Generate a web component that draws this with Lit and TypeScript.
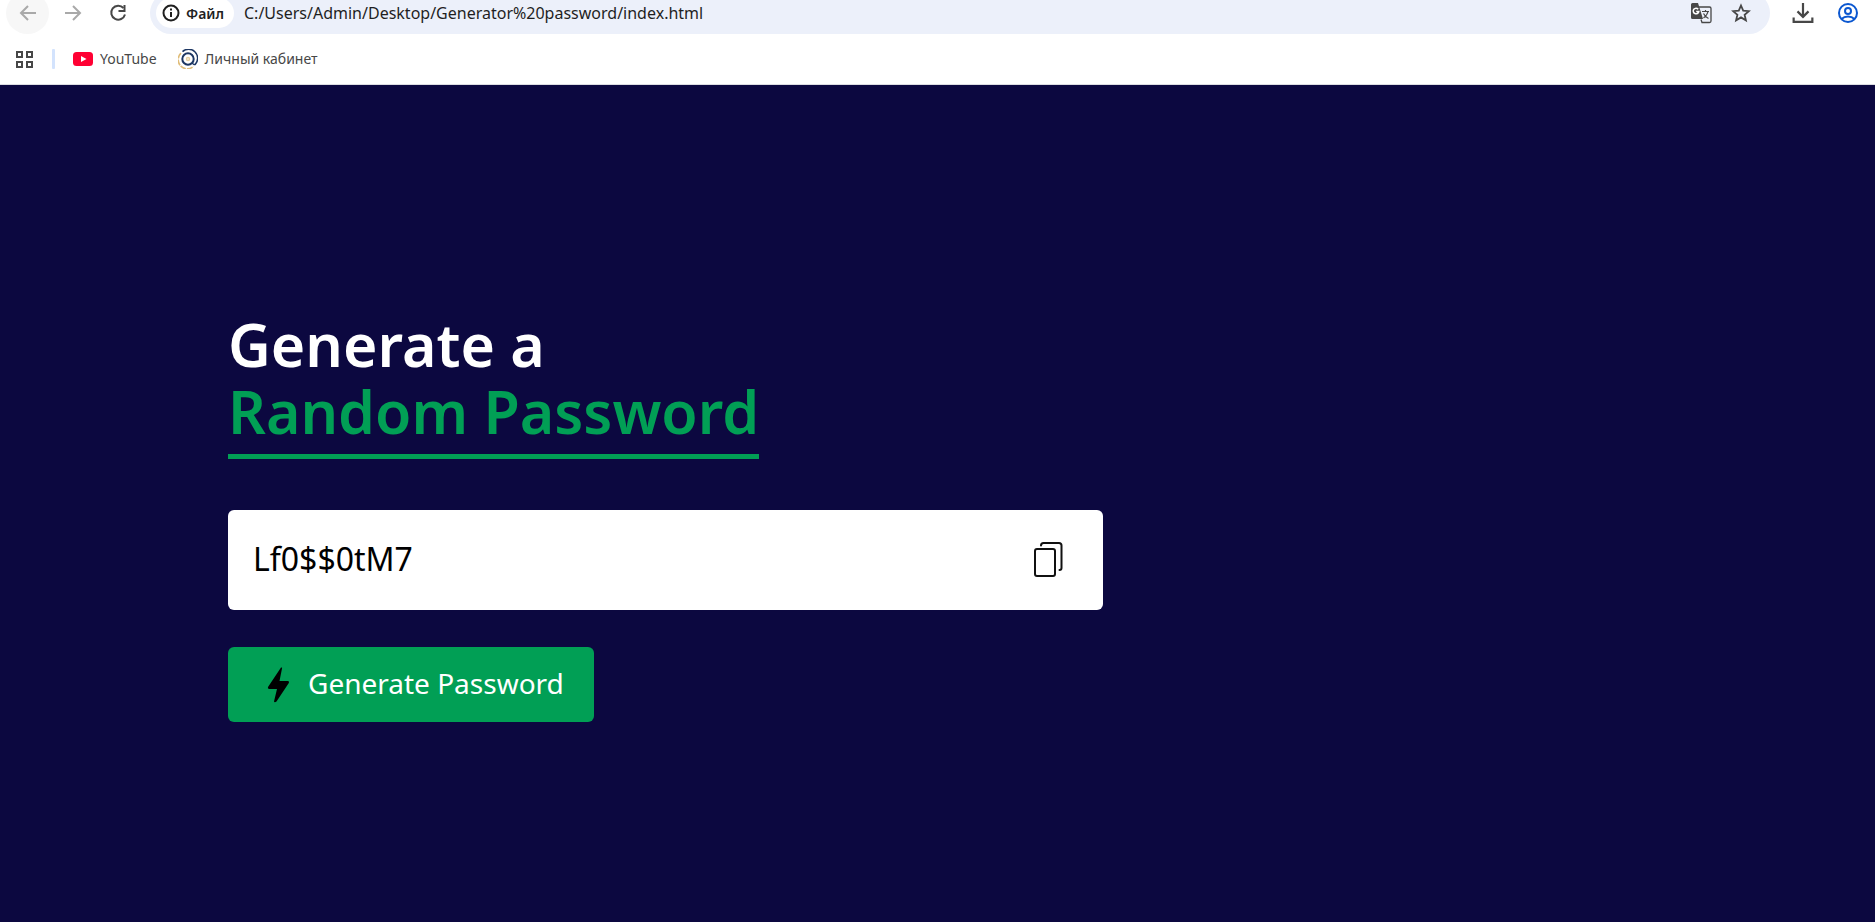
import { LitElement, html, css, svg } from "lit";
import { customElement, state } from "lit/decorators.js";

const icons = {
  back: svg`<path d="M18 10H3M10 3L3 10l7 7" />`,
  forward: svg`<path d="M2 10h15M10 3l7 7-7 7" />`,
  download: svg`<path d="M10 1v12M5 8.500l5 5 5-5M1.500 14v4h17v-4" />`,
};

@customElement("browser-bar")
export class BrowserBar extends LitElement {
  static styles = css`
    :host {
      display: block;
      overflow: hidden;
      background: #fff;
      border-bottom: 1px solid #dcdde2;
      font-family: "Segoe UI", "Noto Sans", sans-serif;
      color: #1f1f1f;
    }
    button {
      border: 0;
      margin: 0;
      padding: 0;
      background: none;
      color: inherit;
      font: inherit;
      display: inline-flex;
      align-items: center;
      justify-content: center;
    }
    svg {
      display: block;
      flex: none;
      fill: none;
      stroke: currentColor;
      stroke-width: 2;
    }
    .toolbar {
      display: flex;
      align-items: center;
      height: 42px;
      margin-top: -8px;
      padding: 0 6px;
    }
    .nav {
      width: 43px;
      height: 42px;
      border-radius: 50%;
      color: #a9a9a9;
      margin-right: 2px;
      flex: none;
    }
    .back {
      background: #f7f7f7;
    }
    .reload {
      color: #474747;
      margin-right: 11px;
    }
    .omnibox {
      flex: 1;
      min-width: 0;
      display: flex;
      align-items: center;
      height: 42px;
      border-radius: 21px;
      background: #ecf0fa;
      padding: 0 19px 0 6px;
      box-sizing: border-box;
    }
    .chip {
      height: 30px;
      border-radius: 15px;
      background: #fff;
      padding: 0 10px 0 6px;
      gap: 6px;
      font-size: 14px;
      font-weight: 600;
      flex: none;
    }
    .url {
      flex: 1;
      min-width: 0;
      border: 0;
      background: none;
      outline: 0;
      padding: 0;
      margin-left: 10px;
      font: inherit;
      font-size: 16px;
      color: inherit;
    }
    .tool {
      flex: none;
      color: #474747;
    }
    .translate {
      margin-right: 19px;
    }
    .download {
      margin-left: 22px;
    }
    .profile {
      margin: 0 11px 0 24px;
      color: #0b57d0;
    }
    .bookmarks {
      display: flex;
      align-items: center;
      height: 50px;
      padding: 0 15px;
      font-size: 14px;
      color: #474747;
    }
    .divider {
      width: 3px;
      height: 20px;
      border-radius: 1px;
      background: #d3e3fd;
      margin: 0 18px;
    }
    .bookmark {
      display: flex;
      align-items: center;
      gap: 7px;
      margin-right: 21px;
      color: inherit;
      text-decoration: none;
      white-space: nowrap;
    }
    .bookmark span {
      padding-bottom: 2px;
    }
  `;

  render() {
    return html`
      <div class="toolbar">
        <button class="nav back" aria-label="Назад">
          <svg width="20" height="20" viewBox="0 0 20 20">${icons.back}</svg>
        </button>
        <button class="nav" aria-label="Вперёд">
          <svg width="20" height="20" viewBox="0 0 20 20">${icons.forward}</svg>
        </button>
        <button class="nav reload" aria-label="Обновить">
          <svg width="20" height="20" viewBox="0 0 20 20">
            <path d="M15.500 5A7 7 0 1 0 17 11.500" />
            <path d="M16.500 2v6h-6" />
          </svg>
        </button>
        <div class="omnibox">
          <button class="chip">
            <svg width="18" height="18" viewBox="0 0 18 18">
              <circle cx="9" cy="9" r="7.500" />
              <path d="M9 8v5M9 4.500v2" />
            </svg>
            Файл
          </button>
          <input
            class="url"
            aria-label="Адрес"
            .value=${"C:/Users/Admin/Desktop/Generator%20password/index.html"}
          />
          <button class="tool translate" aria-label="Перевести">
            <svg width="22" height="22" viewBox="0 0 22 22">
              <path d="M9 5h10.500a1.500 1.500 0 0 1 1.500 1.500v12.500a1.500 1.500 0 0 1-1.500 1.500H12l-1-3" stroke-width="1.300" />
              <path d="M2.500 1H8l5 16H2.500A1.500 1.500 0 0 1 1 15.500v-13A1.500 1.500 0 0 1 2.500 1z" fill="currentColor" stroke="none" />
              <path d="M8.200 7.200A2.800 2.800 0 1 0 8.800 9.500H6.200" stroke="#fff" stroke-width="1.500" />
              <path d="M12 9.500h7M15.500 8v1.500M18 9.500c-.5 3-2.500 5-4.500 6.500M13.500 11.500c1 2 3 4 5 5" stroke-width="1.200" />
            </svg>
          </button>
          <button class="tool" aria-label="Добавить в закладки">
            <svg width="20" height="20" viewBox="0 0 20 20">
              <path d="M10 2.500l2.200 5.100 5.600.5-4.200 3.700 1.300 5.500L10 14.400l-4.900 2.900 1.300-5.500-4.200-3.700 5.600-.5z" stroke-width="1.800" />
            </svg>
          </button>
        </div>
        <button class="tool download" aria-label="Загрузки">
          <svg width="22" height="22" viewBox="0 0 20 20" stroke-width="2.300">${icons.download}</svg>
        </button>
        <button class="tool profile" aria-label="Профиль">
          <svg width="20" height="20" viewBox="0 0 20 20">
            <circle cx="10" cy="10" r="9" />
            <circle cx="10" cy="8" r="3" />
            <path d="M3.500 16c3.500-3.500 9.500-3.500 13 0" />
          </svg>
        </button>
      </div>
      <nav class="bookmarks">
        <button aria-label="Приложения">
          <svg width="19" height="19" viewBox="0 0 19 19">
            <path d="M2 2h5v5H2zM12 2h5v5h-5zM2 12h5v5H2zM12 12h5v5h-5z" />
          </svg>
        </button>
        <span class="divider"></span>
        <a class="bookmark" href="#youtube">
          <svg width="20" height="14" viewBox="0 0 20 14">
            <rect width="20" height="14" rx="3.500" fill="#ff0033" stroke="none" />
            <path d="M8 4l5.500 3L8 10z" fill="#fff" stroke="none" />
          </svg>
          <span>YouTube</span>
        </a>
        <a class="bookmark" href="#cabinet">
          <svg width="20" height="20" viewBox="0 0 20 20">
            <circle cx="10" cy="10" r="5.700" stroke="#1d3763" stroke-width="2" />
            <path d="M4.500 2.600A9 9 0 0 1 17.500 15q-1 1.500-3.500-1" stroke="#1d3763" stroke-width="1.500" />
            <path d="M3 4.200A9 9 0 0 0 15.500 17.300" stroke="#e0bd79" stroke-width="1.600" stroke-dasharray="6 1" />
            <circle cx="10" cy="10" r="1.500" stroke="#e6cfa0" stroke-width="1.500" />
          </svg>
          <span>Личный кабинет</span>
        </a>
      </nav>
    `;
  }
}

@customElement("password-generator")
export class PasswordGenerator extends LitElement {
  static styles = css`
    :host {
      display: block;
      padding: 226px 12.16% 40px;
      background: #0c0840;
      color: #fff;
      font-family: "Lucida Sans", "Noto Sans", sans-serif;
    }
    h1 {
      margin: 0;
      font-size: 59px;
      line-height: 67px;
      font-weight: 600;
    }
    .accent {
      display: table;
      color: #019f55;
      border-bottom: 5px solid #019f55;
      padding-bottom: 9px;
    }
    .display {
      display: flex;
      align-items: center;
      width: 100%;
      max-width: 875px;
      height: 100px;
      margin: 51px 0 37px;
      padding: 0 39px 0 25px;
      box-sizing: border-box;
      border-radius: 6px;
      background: #fff;
      color: #000;
    }
    .password {
      flex: 1;
      min-width: 0;
      border: 0;
      outline: 0;
      padding: 0 0 4px;
      background: none;
      color: inherit;
      font: inherit;
      font-size: 32px;
    }
    .copy,
    .generate {
      border: 0;
      cursor: pointer;
    }
    .copy {
      padding: 0;
      background: none;
    }
    svg {
      display: block;
      flex: none;
    }
    .generate {
      display: inline-flex;
      align-items: center;
      gap: 18px;
      height: 75px;
      padding: 0 30px 0 39px;
      border-radius: 6px;
      background: #019f55;
      color: #fff;
      font: inherit;
      font-size: 28px;
    }
    .label {
      padding-bottom: 3px;
    }
  `;

  @state() private password = "Lf0$$0tM7";

  private generate() {
    const chars = "ABCDEFGHIJKLMNOPQRSTUVWXYZabcdefghijklmnopqrstuvwxyz0123456789@#$%&";
    this.password = Array.from({ length: 9 }, () => chars[Math.floor(Math.random() * chars.length)]).join("");
  }

  private copy() {
    navigator.clipboard?.writeText(this.password);
  }

  render() {
    return html`
      <h1>Generate a <span class="accent">Random Password</span></h1>
      <div class="display">
        <input class="password" aria-label="Password" readonly .value=${this.password} />
        <button class="copy" aria-label="Copy" @click=${this.copy}>
          <svg width="32" height="36" viewBox="0 0 32 36" fill="none" stroke="#111" stroke-width="2" stroke-linecap="round">
            <rect x="3" y="7" width="20" height="27" rx="2" />
            <path d="M9 3.500Q9 1 11.500 1H27q2.500 0 2.500 2.500V26q0 2-2 2" />
          </svg>
        </button>
      </div>
      <button class="generate" @click=${this.generate}>
        <svg width="23" height="36" viewBox="0 0 23 36">
          <path d="M14 .5q1.500-.5 1 1L12.500 14H21q1.700.3.800 2L9.500 34.500Q7.500 36 7 34.500L10 22H2Q.3 21.700 1 20z" fill="#000" />
        </svg>
        <span class="label">Generate Password</span>
      </button>
    `;
  }
}

@customElement("app-root")
export class AppRoot extends LitElement {
  static styles = css`
    :host {
      display: flex;
      flex-direction: column;
      min-height: 100vh;
    }
    .page {
      flex: 1;
    }
  `;

  render() {
    return html`
      <browser-bar></browser-bar>
      <password-generator class="page"></password-generator>
    `;
  }
}
